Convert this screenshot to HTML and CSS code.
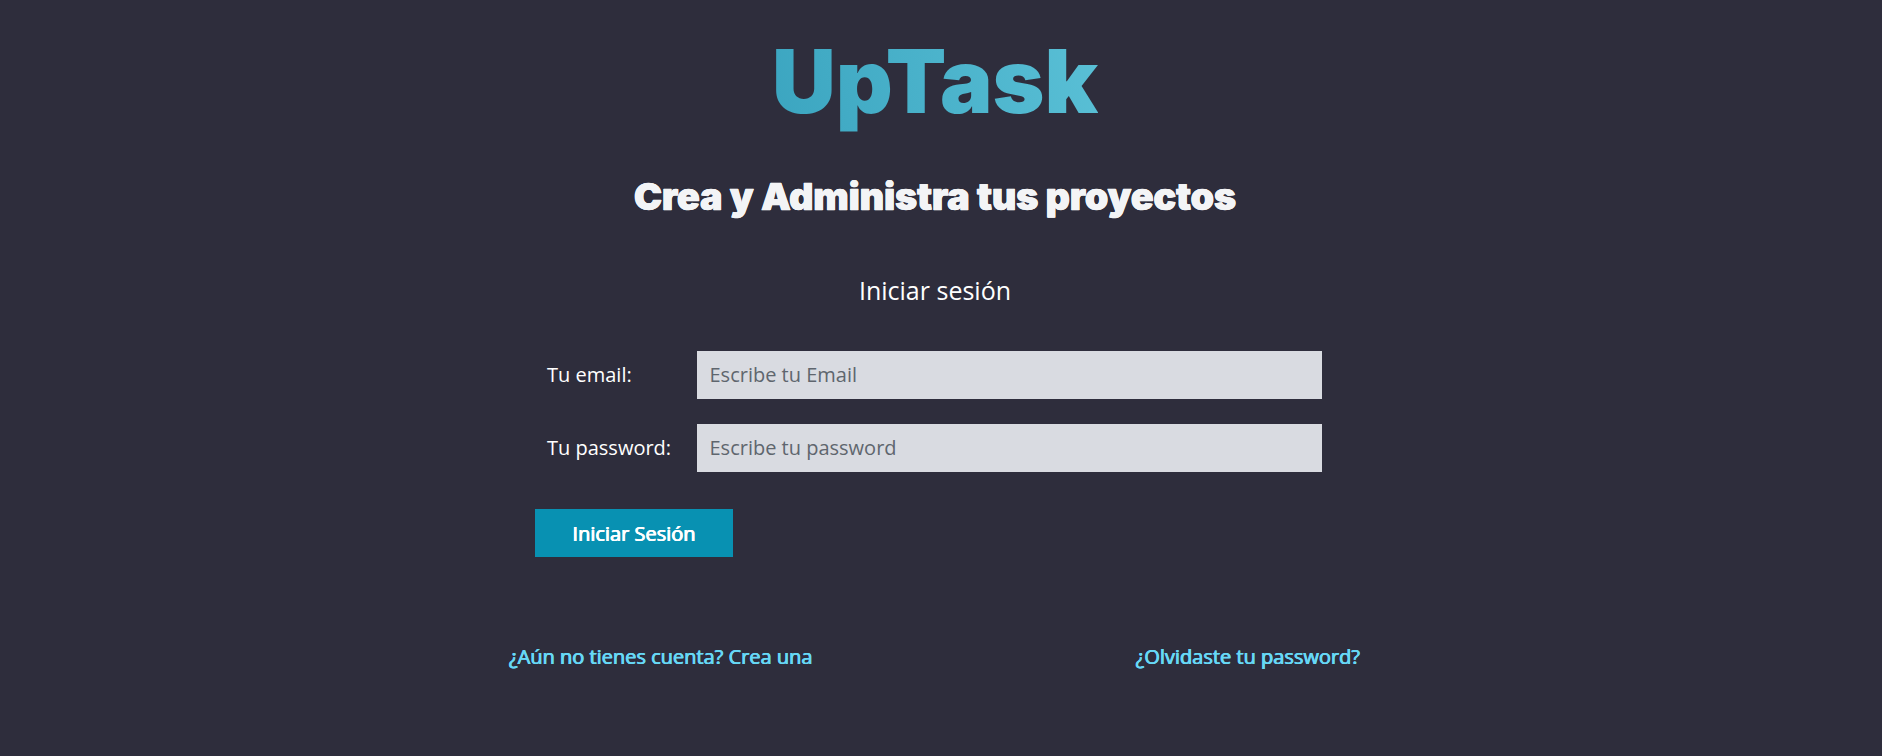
FILE: index.html
```html
<!DOCTYPE html>
<html lang="es">
<head>
<meta charset="utf-8">
<title>UpTask</title>
<link rel="stylesheet" href="styles.css">
</head>
<body>
<main class="contenedor">
  <h1 class="logo"><span class="logo-texto">UpTask</span></h1>
  <p class="tagline">Crea y Administra tus proyectos</p>
  <p class="pagina">Iniciar sesión</p>
  <form class="formulario">
    <div class="campo">
      <label class="etiqueta" for="email">Tu email:</label>
      <input class="entrada" id="email" type="email" placeholder="Escribe tu Email">
    </div>
    <div class="campo">
      <label class="etiqueta" for="password">Tu password:</label>
      <input class="entrada" id="password" type="password" placeholder="Escribe tu password">
    </div>
    <button class="boton" type="button">Iniciar Sesión</button>
  </form>
  <nav class="acciones">
    <a class="enlace" href="#">¿Aún no tienes cuenta? Crea una</a>
    <a class="enlace" href="#">¿Olvidaste tu password?</a>
  </nav>
</main>
</body>
</html>
```
FILE: styles.css
```css
* { box-sizing: border-box; }
html { font-size: 62.5%; }
body {
  margin: 0;
  background: #2e2d3c;
  color: #fff;
  font-family: "Open Sans", sans-serif;
  font-size: 20px;
}
.contenedor {
  width: 850px;
  margin-left: 510px;
  text-align: center;
}
.logo {
  margin: 0;
  padding-top: 26px;
  font: 900 88.3px/109px Inter, sans-serif;
}
.logo-texto {
  background: linear-gradient(75deg, #3ba5c0, #5ac0d6);
  -webkit-background-clip: text;
  background-clip: text;
  color: transparent;
}
.tagline {
  margin: 38px 0 0;
  font: 900 37.5px/48px Inter, sans-serif;
  letter-spacing: -0.05px;
  color: #f3f4f6;
  -webkit-text-stroke: 0.4px #f3f4f6;
  text-shadow: 0.4px 0 #f3f4f6, -0.4px 0 #f3f4f6;
}
.pagina {
  margin: 49px 0 0;
  font-size: 25px;
  line-height: 40px;
}
.formulario {
  width: 800px;
  margin: 41px auto 0;
  text-align: left;
}
.campo {
  display: flex;
  align-items: center;
  height: 48px;
  margin-bottom: 25px;
  padding: 0 12px;
}
.etiqueta {
  flex: 0 0 150px;
  padding-bottom: 2px;
}
.entrada {
  width: 625px;
  height: 48px;
  padding: 0 12.5px 2px;
  border: 0;
  border-radius: 0;
  background: #d9dbe1;
  font: 20px "Open Sans", sans-serif;
}
.entrada::placeholder { color: #5f666e; }
.boton {
  display: block;
  width: 198px;
  height: 48px;
  margin-top: 37px;
  padding: 0;
  border: 0;
  background: #0891b2;
  color: #fff;
  font: 400 20px "Open Sans", sans-serif;
  -webkit-text-stroke: 0.2px currentColor;
  text-shadow: 0.4px 0 currentColor, -0.4px 0 currentColor;
}
.acciones {
  display: flex;
  justify-content: space-between;
  margin-top: 86px;
  margin-left: -1px;
  line-height: 28px;
}
.enlace {
  color: #67d8f5;
  text-decoration: none;
  -webkit-text-stroke: 0.2px currentColor;
  text-shadow: 0.4px 0 currentColor, -0.4px 0 currentColor;
}
```
